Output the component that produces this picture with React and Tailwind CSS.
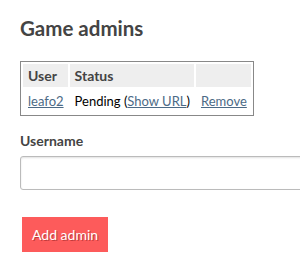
import React from 'react';

const App = () => {
  return (
    <div className="min-h-screen bg-white px-5 pt-4 font-['Lato','Open_Sans',sans-serif] text-[#444] overflow-hidden">
      <h2 className="text-[20.5px] font-bold leading-[24px]">Game admins</h2>

      <table className="mt-[21px] border-separate border-spacing-[2px] border border-[#888] text-[13px] leading-[18px] whitespace-nowrap">
        <thead>
          <tr className="bg-[#eee]">
            <th className="pl-[5px] pr-[4px] py-[3px] text-[14px] leading-[17px] text-left font-bold">User</th>
            <th className="pl-[5px] pr-[4px] py-[3px] text-[14px] leading-[17px] text-left font-bold">Status</th>
            <th className="pl-[5px] pr-[4px] py-[3px] leading-[17px]"></th>
          </tr>
        </thead>
        <tbody>
          <tr>
            <td className="pl-[5px] pr-[4px] py-[3px]">
              <a href="#" className="text-[#4c6a86] underline">leafo2</a>
            </td>
            <td className="pl-[5px] pr-[4px] py-[3px] text-black">
              Pending (<a href="#" className="text-[#4c6a86] underline">Show URL</a>)
            </td>
            <td className="pl-[5px] pr-[4px] py-[3px]">
              <a href="#" className="text-[#4c6a86] underline">Remove</a>
            </td>
          </tr>
        </tbody>
      </table>

      <div className="mt-[16px]">
        <label className="block text-[14px] font-bold leading-[18px]">Username</label>
        <input
          type="text"
          className="mt-[6px] block w-[300px] h-[34px] rounded-[3px] border border-[#bbb] shadow-[inset_0_1px_2px_rgba(0,0,0,0.12)] px-2 outline-none"
        />
      </div>

      <button className="mt-[27px] ml-[2px] h-[35px] px-[10px] bg-[#fd5b5b] text-white text-[14px] [text-shadow:1px_1px_0_#c23c3c]">
        Add admin
      </button>
    </div>
  );
};

export default App;
